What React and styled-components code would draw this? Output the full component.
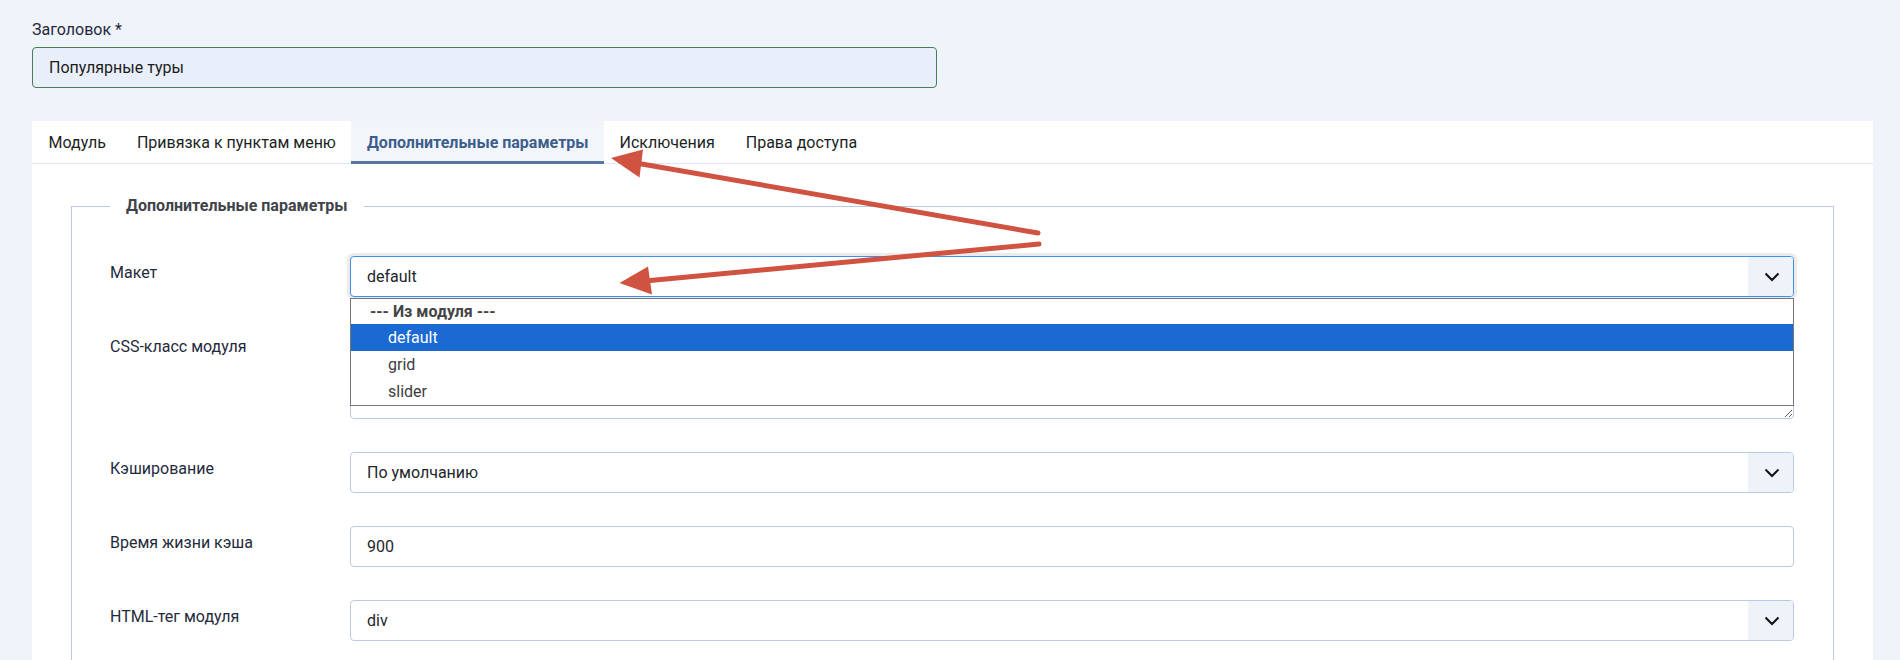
import React from "react";
import styled, { createGlobalStyle, css } from "styled-components";

const GlobalStyle = createGlobalStyle`
  html, body {
    margin: 0;
    padding: 0;
    background: #eff3fa;
  }

  body {
    font-family: Roboto, "Liberation Sans", Arial, sans-serif;
    font-size: 16px;
    color: #22262a;
  }

  * {
    box-sizing: border-box;
  }
`;

const Page = styled.div`
  position: relative;
  min-height: 660px;
  padding: 19px 27px 0 32px;
  overflow: hidden;
`;

const TitleField = styled.div`
  width: 905px;
`;

const TopLabel = styled.label`
  display: block;
  line-height: 22px;
  margin-bottom: 6px;
  color: #1f2a3c;
`;

const TitleInput = styled.input`
  display: block;
  width: 100%;
  height: 41px;
  padding: 0 16px;
  border: 1px solid #4a7d57;
  border-radius: 4px;
  background: #e8effa;
  font: inherit;
  color: #1c1c1c;
  outline: none;
`;

const TabsCard = styled.section`
  margin-top: 33px;
  background: #fff;
  min-height: 600px;
`;

const TabList = styled.nav`
  display: flex;
  height: 43px;
  padding-left: 1px;
  box-shadow: inset 0 -1px 0 #dfe6f1;
`;

const Tab = styled.div`
  display: flex;
  align-items: center;
  padding: 0 15.5px 1px;
  color: #1b1f24;
  white-space: nowrap;

  ${(p) =>
    p.$active &&
    css`
      background: #f2f6fa;
      color: #3d5d8c;
      font-weight: 700;
      box-shadow: inset 0 -3px 0 #5976a3;
    `}
`;

const TabBody = styled.div`
  padding: 31px 39px 0 39px;
`;

const Fieldset = styled.fieldset`
  margin: 0;
  padding: 39px 39px 40px 38px;
  border: 1px solid #b8cae5;
  border-bottom: none;
  min-height: 500px;
`;

const Legend = styled.legend`
  padding: 0 16px;
  line-height: 22px;
  font-weight: 700;
  color: #404348;
`;

const Row = styled.div`
  display: grid;
  grid-template-columns: 240px 1fr;
  margin-bottom: 33px;
`;

const RowLabel = styled.label`
  padding-top: 6px;
  line-height: 22px;
  color: #1f2a3c;
`;

const ControlWrap = styled.div`
  position: relative;
`;

const SelectBox = styled.div`
  display: flex;
  align-items: stretch;
  height: 41px;
  border: 1px solid ${(p) => (p.$focused ? "#3d8ff2" : "#b9cae4")};
  border-radius: 4px;
  background: #fff;
  overflow: hidden;
  box-shadow: ${(p) => (p.$focused ? "0 0 0 3px #ebebeb" : "none")};
`;

const SelectValue = styled.div`
  flex: 1;
  display: flex;
  align-items: center;
  padding: 0 16px;
`;

const Caret = styled.div`
  width: 45px;
  display: flex;
  align-items: center;
  justify-content: center;
  background: #eef3fa;
  padding-left: 2px;
`;

const TextInput = styled.input`
  display: block;
  width: 100%;
  height: 41px;
  padding: 0 16px;
  border: 1px solid #b9cae4;
  border-radius: 4px;
  background: #fff;
  font: inherit;
  color: #22262a;
  outline: none;
`;

const TextArea = styled.textarea`
  display: block;
  width: 100%;
  height: 89px;
  padding: 8px 16px;
  border: 1px solid #b9cae4;
  border-radius: 4px;
  background: #fff;
  font: inherit;
  outline: none;
`;

const OptionList = styled.ul`
  position: absolute;
  z-index: 2;
  top: 42px;
  left: 0;
  right: 0;
  margin: 0;
  padding: 0;
  list-style: none;
  background: #fff;
  border: 1px solid #767676;
`;

const GroupLabel = styled.li`
  height: 25px;
  line-height: 25px;
  padding-left: 19px;
  font-weight: 700;
  color: #444;
`;

const Option = styled.li`
  height: 27px;
  line-height: 27px;
  padding-left: 37px;
  color: ${(p) => (p.$selected ? "#fff" : "#3c3c3c")};
  background: ${(p) => (p.$selected ? "#1b69d3" : "transparent")};
`;

const Annotations = styled.svg`
  position: absolute;
  top: 0;
  left: 0;
  pointer-events: none;
  z-index: 5;
`;

const Chevron = () => (
  <svg width="16" height="10" viewBox="0 0 16 10">
    <path d="M1.5 1.5 L8 8 L14.5 1.5" fill="none" stroke="#111" strokeWidth="2" />
  </svg>
);

const Select = ({ value, focused, children }) => (
  <ControlWrap>
    <SelectBox $focused={focused}>
      <SelectValue>{value}</SelectValue>
      <Caret>
        <Chevron />
      </Caret>
    </SelectBox>
    {children}
  </ControlWrap>
);

const tabs = [
  "Модуль",
  "Привязка к пунктам меню",
  "Дополнительные параметры",
  "Исключения",
  "Права доступа",
];

const layouts = ["default", "grid", "slider"];

const Arrow = ({ from, to, head }) => (
  <g fill="#d05241" stroke="#d05241">
    <line
      x1={from[0]}
      y1={from[1]}
      x2={to[0]}
      y2={to[1]}
      strokeWidth="5"
      strokeLinecap="round"
    />
    <polygon points={head} stroke="none" />
  </g>
);

export default function App() {
  return (
    <>
      <GlobalStyle />
      <Page>
        <TitleField>
          <TopLabel>Заголовок *</TopLabel>
          <TitleInput value="Популярные туры" readOnly />
        </TitleField>

        <TabsCard>
          <TabList>
            {tabs.map((t, i) => (
              <Tab key={t} $active={i === 2}>
                {t}
              </Tab>
            ))}
          </TabList>

          <TabBody>
            <Fieldset>
              <Legend>Дополнительные параметры</Legend>

              <Row>
                <RowLabel>Макет</RowLabel>
                <Select value="default" focused>
                  <OptionList>
                    <GroupLabel>--- Из модуля ---</GroupLabel>
                    {layouts.map((l) => (
                      <Option key={l} $selected={l === "default"}>
                        {l}
                      </Option>
                    ))}
                  </OptionList>
                </Select>
              </Row>

              <Row>
                <RowLabel>CSS-класс модуля</RowLabel>
                <ControlWrap>
                  <TextArea readOnly />
                </ControlWrap>
              </Row>

              <Row>
                <RowLabel>Кэширование</RowLabel>
                <Select value="По умолчанию" />
              </Row>

              <Row>
                <RowLabel>Время жизни кэша</RowLabel>
                <ControlWrap>
                  <TextInput value="900" readOnly />
                </ControlWrap>
              </Row>

              <Row>
                <RowLabel>HTML-тег модуля</RowLabel>
                <Select value="div" />
              </Row>
            </Fieldset>
          </TabBody>
        </TabsCard>

        <Annotations width="1900" height="660" viewBox="0 0 1900 660">
          <Arrow
            from={[1038, 233]}
            to={[636, 163]}
            head="611,158 643,149.5 639.5,177.5"
          />
          <Arrow
            from={[1039, 244]}
            to={[645, 281]}
            head="619.5,283 648,266.5 652,294.5"
          />
        </Annotations>
      </Page>
    </>
  );
}
